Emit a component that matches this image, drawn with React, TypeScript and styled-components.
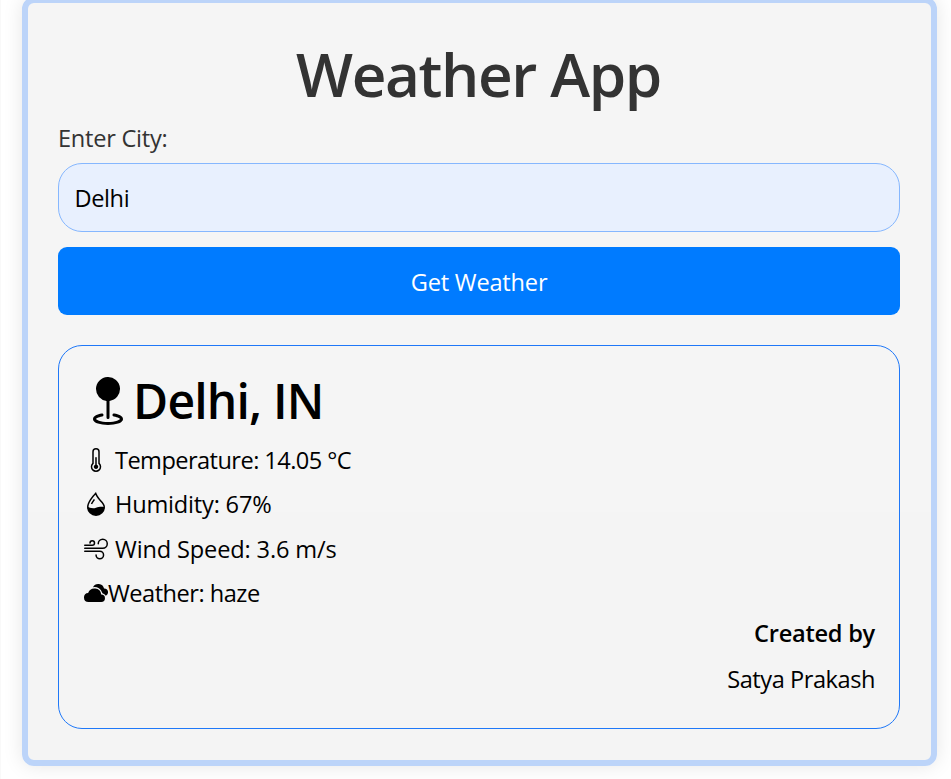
import React from "react";
import styled, { createGlobalStyle } from "styled-components";
import {
  BsGeoFill,
  BsThermometerHalf,
  BsDropletHalf,
  BsWind,
  BsCloudsFill,
} from "react-icons/bs";

const GlobalStyle = createGlobalStyle`
  *, *::before, *::after { box-sizing: border-box; }
  body {
    margin: 0;
    overflow: hidden;
    background: #fff;
    color: #000;
    font: 400 23.6px/36px "Open Sans", "Noto Sans", sans-serif;
  }
`;

const Page = styled.main`
  height: 779px;
  padding: 0 14px 0 21px;
  border-left: 1px solid #f9f9f9;
  overflow: hidden;
`;

const Card = styled.section`
  height: 769px;
  margin-top: -3px;
  padding: 30px 31px 30px 30px;
  border: 6px solid #bcd4f9;
  border-radius: 12px;
  background: linear-gradient(#f5f5f5 67%, #f4f4f4 67%);
  background-origin: border-box;
  box-shadow: 0 0 20px rgba(0, 0, 0, 0.1);
`;

const Title = styled.h1`
  margin: 5px 0 9px;
  color: #333;
  font-size: 60.3px;
  font-weight: 550;
  line-height: 73px;
  letter-spacing: -1.4px;
  text-indent: -1px;
  text-align: center;
`;

const Form = styled.form`
  display: flex;
  flex-direction: column;
`;

const Label = styled.label`
  margin-bottom: 7px;
  color: #333;
  letter-spacing: -0.25px;
`;

const CityInput = styled.input`
  height: 69px;
  padding: 0 15.5px;
  border: 1px solid #86b7fe;
  border-radius: 24px;
  outline: none;
  background: #e8f0fe;
  color: #000;
  font: inherit;
  letter-spacing: -0.4px;
`;

const SubmitButton = styled.button`
  height: 68px;
  margin-top: 15px;
  padding: 1px 0 0;
  border: 0;
  border-radius: 9px;
  background: #007bff;
  color: #fff;
  font: inherit;
  letter-spacing: -0.2px;
`;

const Result = styled.article`
  height: 384px;
  margin-top: 30px;
  padding: 24px 24px 24px 25px;
  border: 1px solid #1f78f8;
  border-radius: 24px;
`;

const Place = styled.h2`
  display: flex;
  align-items: center;
  gap: 1px;
  height: 62px;
  margin: 0 0 10px;
  font-size: 48px;
  font-weight: 550;
  letter-spacing: -0.8px;
`;

const Reading = styled.p<{ $gap: number; $tracking: number }>`
  display: flex;
  align-items: center;
  gap: ${(p) => p.$gap}px;
  height: 36px;
  margin: 0 0 8.4px;
  letter-spacing: ${(p) => p.$tracking}px;

  svg {
    flex: none;
    width: 24px;
    height: 24px;
  }
`;

const Credit = styled.footer`
  display: flex;
  flex-direction: column;
  align-items: flex-end;
  gap: 10px;
  margin-top: -5px;
`;

const CreditTitle = styled.strong`
  font-weight: 570;
  letter-spacing: -0.25px;
`;

const CreditName = styled.span`
  letter-spacing: -0.45px;
`;

const readings = [
  { Icon: BsThermometerHalf, text: "Temperature: 14.05 °C", gap: 7, tracking: -0.56 },
  { Icon: BsDropletHalf, text: "Humidity: 67%", gap: 7, tracking: -0.2 },
  { Icon: BsWind, text: "Wind Speed: 3.6 m/s", gap: 7, tracking: -0.15 },
  { Icon: BsCloudsFill, text: "Weather: haze", gap: 0, tracking: -0.5 },
];

export default function App() {
  return (
    <>
      <GlobalStyle />
      <Page>
        <Card>
          <Title>Weather App</Title>
          <Form onSubmit={(e) => e.preventDefault()}>
            <Label htmlFor="city">Enter City:</Label>
            <CityInput id="city" defaultValue="Delhi" />
            <SubmitButton>Get Weather</SubmitButton>
          </Form>
          <Result>
            <Place>
              <BsGeoFill />
              Delhi, IN
            </Place>
            {readings.map(({ Icon, text, gap, tracking }) => (
              <Reading key={text} $gap={gap} $tracking={tracking}>
                <Icon />
                {text}
              </Reading>
            ))}
            <Credit>
              <CreditTitle>Created by</CreditTitle>
              <CreditName>Satya Prakash</CreditName>
            </Credit>
          </Result>
        </Card>
      </Page>
    </>
  );
}
